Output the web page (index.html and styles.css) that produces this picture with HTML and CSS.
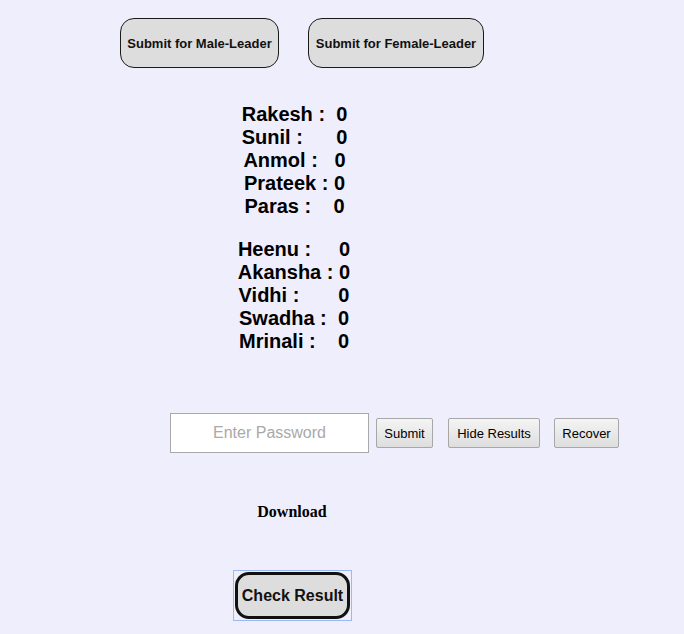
FILE: index.html
```html
<!DOCTYPE html>
<html>
<head>
<meta charset="utf-8">
<title>Vote</title>
<link rel="stylesheet" href="styles.css">
</head>
<body>
<div class="top">
  <button class="leader male">Submit for Male-Leader</button>
  <button class="leader female">Submit for Female-Leader</button>
</div>
<div class="scores">
  <div class="group">
    <div class="line">Rakesh :  0</div>
    <div class="line">Sunil :      0</div>
    <div class="line">Anmol :   0</div>
    <div class="line">Prateek : 0</div>
    <div class="line">Paras :    0</div>
  </div>
  <div class="group second">
    <div class="line">Heenu :     0</div>
    <div class="line">Akansha : 0</div>
    <div class="line">Vidhi :       0</div>
    <div class="line">Swadha :  0</div>
    <div class="line">Mrinali :    0</div>
  </div>
</div>
<div class="controls">
  <input class="password" type="password" placeholder="Enter Password">
  <button class="small submit">Submit</button>
  <button class="small hide">Hide Results</button>
  <button class="small recover">Recover</button>
</div>
<div class="download">Download</div>
<div class="check-wrap">
  <span class="focus-ring"><button class="check">Check Result</button></span>
</div>
</body>
</html>
```

FILE: styles.css
```css
html, body {
  margin: 0;
  padding: 0;
}
body {
  background: #efeefd;
  font-family: "Liberation Sans", Arial, sans-serif;
  color: #000;
  width: 684px;
  height: 634px;
  overflow: hidden;
}
.top {
  display: flex;
  gap: 29px;
  padding: 18px 0 0 120px;
}
.leader {
  box-sizing: border-box;
  height: 50px;
  background: #dddddd;
  border: 1px solid #1a1a1a;
  border-radius: 14px;
  font-family: "Liberation Sans", Arial, sans-serif;
  font-weight: bold;
  font-size: 13px;
  color: #111;
  padding: 0;
}
.male { width: 159px; }
.female { width: 176px; }
.scores {
  width: 589px;
  margin-top: 35px;
  text-align: center;
}
.line {
  white-space: pre;
  font-weight: bold;
  font-size: 20px;
  line-height: 23px;
}
.second {
  margin-top: 20px;
  width: 588px;
}
.controls {
  display: flex;
  align-items: center;
  padding-left: 170px;
  margin-top: 60px;
}
.password {
  box-sizing: border-box;
  width: 199px;
  height: 40px;
  border: 1px solid #a9a9a9;
  background: #fff;
  text-align: center;
  font-family: "Liberation Sans", Arial, sans-serif;
  font-size: 16px;
  padding: 0;
  margin: 0 7px 0 0;
}
.password::placeholder {
  color: #a9a9a9;
}
.small {
  box-sizing: border-box;
  height: 30px;
  margin: 0;
  padding: 0;
  background: linear-gradient(#f4f4f4, #dedede);
  border: 1px solid #a7a7a7;
  border-radius: 2px;
  font-family: "Liberation Sans", Arial, sans-serif;
  font-size: 13px;
  color: #000;
}
.submit { width: 57px; margin-right: 15px; }
.hide { width: 92px; margin-right: 14px; }
.recover { width: 65px; }
.download {
  width: 584px;
  text-align: center;
  font-family: "Liberation Serif", "Times New Roman", serif;
  font-weight: bold;
  font-size: 16px;
  margin-top: 50px;
  line-height: 18px;
}
.check-wrap {
  display: flex;
  padding: 49px 0 0 233px;
}
.focus-ring {
  display: flex;
  padding: 1px;
  border: 1px solid #9bb9f4;
}
.check {
  box-sizing: border-box;
  width: 115px;
  height: 47px;
  background: #dddddd;
  border: 3px solid #111;
  border-radius: 14px;
  font-family: "Liberation Sans", Arial, sans-serif;
  font-weight: bold;
  font-size: 16px;
  color: #111;
  padding: 0;
}
```
